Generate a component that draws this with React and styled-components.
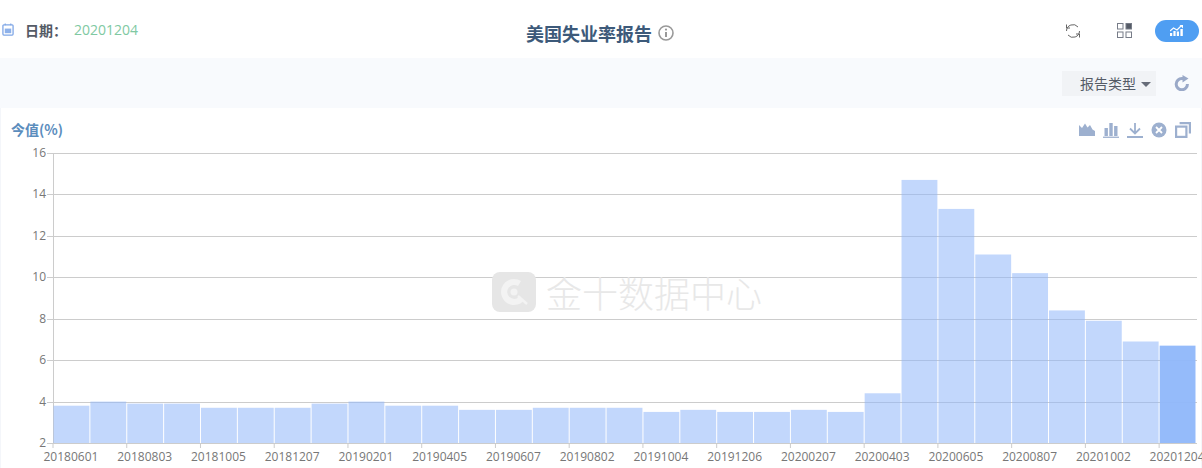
import React from "react";
import styled, { createGlobalStyle } from "styled-components";

const Global = createGlobalStyle`
  html, body { margin: 0; padding: 0; background: #fff; overflow: hidden; }
  body { font-family: "Open Sans", "Noto Sans CJK SC", sans-serif; }
`;

const Page = styled.div`
  width: 1202px;
  height: 468px;
  overflow: hidden;
`;

const Header = styled.header`
  height: 58px;
  display: grid;
  grid-template-columns: 1fr auto 1fr;
  align-items: center;
`;

const DateBox = styled.div`
  display: flex;
  align-items: center;
  padding: 0 0 0 2px;
  margin-top: 1px;
  height: 20px;
`;

const DateLabel = styled.span`
  margin-left: 11px;
  font-size: 14px;
  font-weight: 700;
  color: #555b66;
  font-family: "Noto Sans CJK SC", sans-serif;
`;

const DateValue = styled.span`
  margin-left: 7px;
  font-size: 14px;
  color: #80c9a2;
`;

const Title = styled.h1`
  margin: 8px 0 0;
  padding-right: 2px;
  display: flex;
  align-items: center;
  gap: 6px;
  font-size: 18px;
  line-height: 24px;
  font-weight: 700;
  color: #3d5a7a;
  font-family: "Noto Sans CJK SC", sans-serif;
`;

const HeaderTools = styled.div`
  display: flex;
  justify-content: flex-end;
  align-items: center;
  margin-top: 3px;
  padding-right: 3px;
`;

const ToolIcon = styled.span`
  display: flex;
  margin-right: ${(p) => p.$gap}px;
`;

const Pill = styled.span`
  width: 44px;
  height: 22px;
  border-radius: 11px;
  background: #4f9ef2;
  display: flex;
  align-items: center;
  justify-content: center;
`;

const Toolbar = styled.div`
  height: 50px;
  background: #f8fafd;
  display: flex;
  align-items: center;
  justify-content: flex-end;
  padding-right: 12px;
`;

const Select = styled.div`
  width: 94px;
  height: 25px;
  box-sizing: border-box;
  padding-left: 18px;
  background: #f1f3f6;
  display: flex;
  align-items: center;
  gap: 5px;
  font-size: 14px;
  color: #555b66;
  font-family: "Noto Sans CJK SC", sans-serif;
  margin-right: 18px;
`;

const Caret = styled.i`
  width: 0;
  height: 0;
  border-left: 5px solid transparent;
  border-right: 5px solid transparent;
  border-top: 5px solid #666c78;
  margin-top: 2px;
`;

const ChartPanel = styled.section`
  position: relative;
  height: 360px;
  box-sizing: border-box;
  border-left: 1px solid #f4f6fa;
  border-right: 1px solid #f4f6fa;
`;

const ChartHead = styled.div`
  height: 35px;
  display: flex;
  justify-content: space-between;
  align-items: center;
  padding: 9px 10px 0 10px;
  box-sizing: border-box;
`;

const ChartName = styled.span`
  font-size: 14px;
  line-height: 20px;
  margin-top: -2px;
  font-weight: 700;
  color: #5b8dbd;
  font-family: "Noto Sans CJK SC", sans-serif;
`;

const Toolbox = styled.div`
  display: flex;
  gap: 8px;
`;

const ChartSvg = styled.svg`
  display: block;
  margin-left: -1px;
  font-family: "Open Sans", sans-serif;
  font-size: 12px;
`;

const Watermark = styled.div`
  position: absolute;
  left: 491px;
  top: 163px;
  display: flex;
  align-items: center;
  gap: 10px;
  font-size: 36px;
  line-height: 42px;
  color: #e8e8e8;
  font-family: "Noto Sans CJK SC", sans-serif;
  font-weight: 300;
  pointer-events: none;
`;

const values = [
  3.8, 4.0, 3.9, 3.9, 3.7, 3.7, 3.7, 3.9, 4.0, 3.8, 3.8, 3.6, 3.6, 3.7, 3.7, 3.7,
  3.5, 3.6, 3.5, 3.5, 3.6, 3.5, 4.4, 14.7, 13.3, 11.1, 10.2, 8.4, 7.9, 6.9, 6.7,
];
const dates = [
  "20180601", "20180803", "20181005", "20181207", "20190201", "20190405", "20190607", "20190802",
  "20191004", "20191206", "20200207", "20200403", "20200605", "20200807", "20201002", "20201204",
];
const ticks = [2, 4, 6, 8, 10, 12, 14, 16];

const LEFT = 53;
const RIGHT = 1196;
const TOP = 10;
const BOTTOM = 300;
const band = (RIGHT - LEFT) / values.length;
const yOf = (v) => BOTTOM - ((v - 2) / 14) * (BOTTOM - TOP);

const Chart = () => (
  <ChartSvg width="1202" height="325" viewBox="0 0 1202 325">
    {ticks.map((t) => (
      <g key={t}>
        <line x1={LEFT - 6} x2={RIGHT + 1} y1={Math.round(yOf(t)) + 0.5} y2={Math.round(yOf(t)) + 0.5} stroke="#ccc" />
        <text x={LEFT - 7} y={yOf(t) + 4} textAnchor="end" fill="#777">{t}</text>
      </g>
    ))}
    <line x1={LEFT + 0.5} x2={LEFT + 0.5} y1={TOP} y2={BOTTOM} stroke="#ccc" />
    {values.map((v, i) => (
      <rect
        key={i}
        x={LEFT + i * band + 0.5}
        y={yOf(v)}
        width={band - 1}
        height={BOTTOM - yOf(v)}
        fill="#8fb7fa"
        fillOpacity={i === values.length - 1 ? 0.95 : 0.55}
      />
    ))}
    {dates.map((d, i) => (
      <g key={d}>
        <line x1={LEFT + i * 2 * band} x2={LEFT + i * 2 * band} y1={BOTTOM} y2={BOTTOM + 5} stroke="#ccc" />
        <text x={LEFT + (i * 2 + 0.5) * band - 0.5} y={BOTTOM + 18} textAnchor="middle" fill="#777">{d}</text>
      </g>
    ))}
  </ChartSvg>
);

const CalendarIcon = () => (
  <svg width="12" height="13" viewBox="0 0 13 14" fill="none">
    <rect x="1" y="2" width="11" height="11" rx="1" stroke="#7fa6e6" strokeWidth="1.4" />
    <rect x="3" y="6" width="7" height="5" fill="#8db1ea" />
    <path d="M3.5 0.5v2M9.5 0.5v2" stroke="#7fa6e6" strokeWidth="1.2" />
  </svg>
);

const InfoIcon = () => (
  <svg width="16" height="16" viewBox="0 0 16 16" fill="none">
    <circle cx="8" cy="8" r="7" stroke="#999" strokeWidth="1.6" />
    <path d="M8 7v5" stroke="#999" strokeWidth="2" />
    <circle cx="8" cy="4.6" r="1.1" fill="#999" />
  </svg>
);

const SwapIcon = () => (
  <svg width="16" height="16" viewBox="0 0 16 16" fill="none" stroke="#666" strokeWidth="1">
    <path d="M1.5 8A6.5 6.5 0 0 1 13 4" />
    <path d="M14.5 8A6.5 6.5 0 0 1 3 12" />
    <path d="M1.5 1.5V5H5" />
    <path d="M14.5 14.5V11H11" />
  </svg>
);

const GridIcon = () => (
  <svg width="15" height="15" viewBox="0 0 15 15" fill="none" stroke="#777c88" strokeWidth="1">
    <rect x="0.5" y="0.5" width="5.5" height="5.5" />
    <rect x="9" y="0.5" width="5.5" height="5.5" fill="#555b66" />
    <rect x="0.5" y="9" width="5.5" height="5.5" />
    <rect x="9" y="9" width="5.5" height="5.5" />
  </svg>
);

const TrendIcon = () => (
  <svg width="14" height="11" viewBox="0 0 14 11" fill="#fff">
    <rect x="0" y="8" width="2.2" height="3" />
    <rect x="3.4" y="6" width="2.2" height="5" />
    <rect x="6.8" y="6.5" width="2.2" height="4.5" />
    <rect x="10.4" y="4" width="2.4" height="7" />
    <path d="M0 6l3.5-3 3.5 2 4-4" fill="none" stroke="#fff" strokeWidth="1.1" />
    <path d="M9.5 0H13v3.5z" />
  </svg>
);

const ReloadIcon = () => (
  <svg width="16" height="16" viewBox="0 0 16 16" fill="none">
    <path d="M13.4 9A5.6 5.6 0 1 1 8 3.6h2" stroke="#9aa9c8" strokeWidth="3" />
    <path d="M8.5 0L14.5 3.6 8.5 7.4z" fill="#9aa9c8" />
  </svg>
);

const AreaTool = () => (
  <svg width="16" height="14" viewBox="0 0 16 14" fill="#9db0cf">
    <path d="M0 14V3l3 3 3-4.5 2.5 4L11 3l2.5 4.5L16 9v5z" />
  </svg>
);

const BarTool = () => (
  <svg width="16" height="16" viewBox="0 0 16 16" fill="#9db0cf">
    <rect x="1.5" y="6" width="3.4" height="8" />
    <rect x="6.3" y="1" width="3.4" height="13" />
    <rect x="11.1" y="4" width="3.4" height="10" />
    <rect x="0" y="14.6" width="16" height="1.3" />
  </svg>
);

const SaveTool = () => (
  <svg width="16" height="16" viewBox="0 0 16 16" fill="none" stroke="#9db0cf" strokeWidth="1.8">
    <path d="M8 1v10M3 6.5l5 5 5-5M0 15h16" />
  </svg>
);

const ClearTool = () => (
  <svg width="16" height="16" viewBox="0 0 16 16" fill="none">
    <circle cx="8" cy="8" r="7.5" fill="#9db0cf" />
    <path d="M5 5l6 6M11 5l-6 6" stroke="#fff" strokeWidth="1.8" />
  </svg>
);

const CopyTool = () => (
  <svg width="16" height="16" viewBox="0 0 16 16" fill="none" stroke="#9db0cf" strokeWidth="2.2">
    <rect x="1.1" y="4.6" width="10.3" height="10.3" />
    <path d="M4.6 1.1h10.3v10.3" />
  </svg>
);

const LogoMark = () => (
  <svg width="44" height="40" viewBox="0 0 44 40">
    <rect width="44" height="40" rx="8" fill="#e6e6e6" />
    <path d="M22 7a13 13 0 1 0 9 22.4L27 25a7 7 0 1 1-1-11l3-5A13 13 0 0 0 22 7z" fill="#f3f3f3" />
    <circle cx="22" cy="20" r="3.5" fill="#f3f3f3" />
    <path d="M26 24l9 8" stroke="#f3f3f3" strokeWidth="2.5" />
  </svg>
);

export default function App() {
  return (
    <Page>
      <Global />
      <Header>
        <DateBox>
          <CalendarIcon />
          <DateLabel>日期：</DateLabel>
          <DateValue>20201204</DateValue>
        </DateBox>
        <Title>
          美国失业率报告
          <InfoIcon />
        </Title>
        <HeaderTools>
          <ToolIcon $gap={36}><SwapIcon /></ToolIcon>
          <ToolIcon $gap={23}><GridIcon /></ToolIcon>
          <Pill><TrendIcon /></Pill>
        </HeaderTools>
      </Header>
      <Toolbar>
        <Select>
          报告类型
          <Caret />
        </Select>
        <ReloadIcon />
      </Toolbar>
      <ChartPanel>
        <ChartHead>
          <ChartName>今值(%)</ChartName>
          <Toolbox>
            <AreaTool />
            <BarTool />
            <SaveTool />
            <ClearTool />
            <CopyTool />
          </Toolbox>
        </ChartHead>
        <Chart />
        <Watermark>
          <LogoMark />
          金十数据中心
        </Watermark>
      </ChartPanel>
    </Page>
  );
}
